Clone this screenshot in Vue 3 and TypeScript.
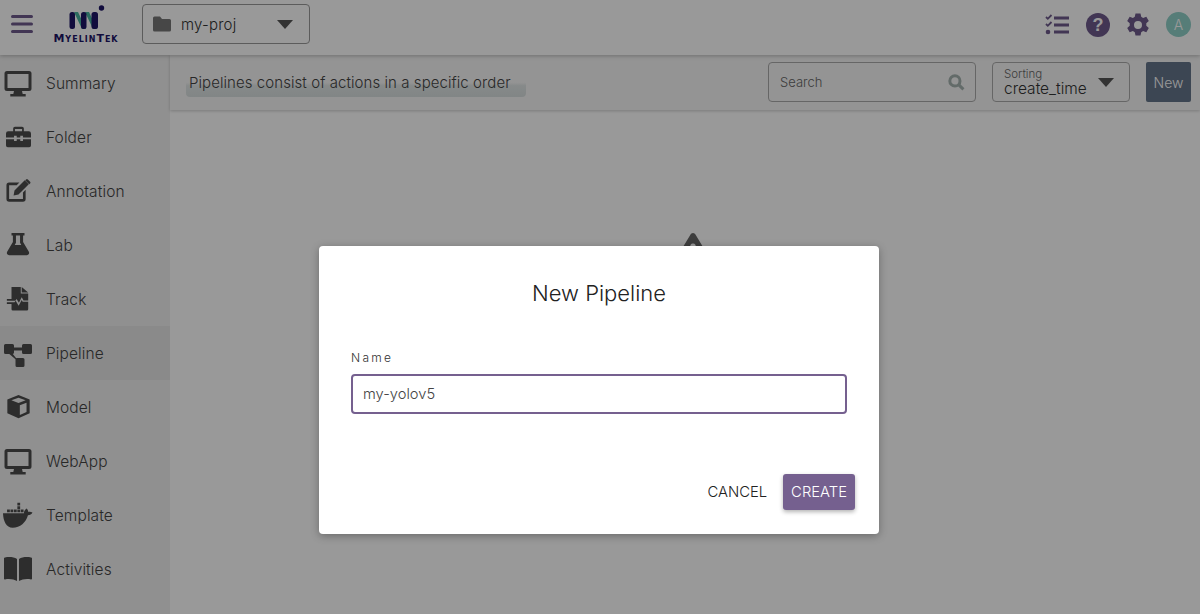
<script setup lang="ts">
interface NavItem { label: string; icon: string; size: number; active?: boolean }
const monitor = 'M3 1h22a2.500 2.500 0 0 1 2.500 2.500v15a2.500 2.500 0 0 1-2.500 2.500h-7l.7 3h3v2.500H6.300V24h3l.7-3H3a2.500 2.500 0 0 1-2.500-2.500v-15A2.500 2.500 0 0 1 3 1zm.5 3v14h21V4z'
const items: NavItem[] = [
  { label: 'Summary', size: 28, icon: monitor },
  { label: 'Folder', size: 25, icon: 'M10 2h8a2 2 0 0 1 2 2v3h5.500A2.500 2.500 0 0 1 28 9.500V14H19v-2h-3v2h-4v-2H9v2H0V9.500A2.500 2.500 0 0 1 2.500 7H8V4a2 2 0 0 1 2-2zm0 2.500V7h8V4.500zM0 16h9v2h3v-2h4v2h3v-2h9v7a2 2 0 0 1-2 2H2a2 2 0 0 1-2-2z' },
  { label: 'Annotation', size: 25, icon: 'M3.500 4H15l-3 3H3.500v15.500H19V15l3-3v10.500a3 3 0 0 1-3 3H3.500a3 3 0 0 1-3-3V7a3 3 0 0 1 3-3zM21 1.500l4.500 4.500L14 17.500l-5.500 1 1-5.500zM22.500.5a1.500 1.500 0 0 1 2 0l2.500 2.500a1.500 1.500 0 0 1 0 2L26 6l-4.500-4.500z' },
  { label: 'Lab', size: 26, icon: 'M7 1h14v2.800h-1.500v7l6.200 10.600c1 1.800-.2 3.600-2.200 3.600H4.500c-2 0-3.200-1.800-2.200-3.600l6.200-10.600v-7H7zm4.800 2.800v7.800L10.500 14h7l-1.300-2.400V3.800z' },
  { label: 'Track', size: 26, icon: 'M7 1h10v7h8v7.500h-5l-2-3.500-3 6-2.500-4-1.300 2H2v-2h5zM18 1l7 6h-7zM2 17.500h8.300l1.200-1.500 3.200 5.300 3.300-6.300 1 2H25V25a1.500 1.500 0 0 1-1.500 1.500h-15A1.500 1.500 0 0 1 7 25v-5.500H2z' },
  { label: 'Pipeline', size: 28, active: true, icon: 'M1.500 4h7A1.500 1.500 0 0 1 10 5.500V7.500h8V5.500A1.500 1.500 0 0 1 19.500 4h7A1.500 1.500 0 0 1 28 5.500v7a1.500 1.500 0 0 1-1.500 1.500h-7a1.500 1.500 0 0 1-1.500-1.500v-2h-8v2A1.500 1.500 0 0 1 8.800 14l3.400 4.200c.3-.1.500-.2.800-.2h6a1.500 1.500 0 0 1 1.500 1.500v6a1.500 1.500 0 0 1-1.500 1.500h-6a1.500 1.500 0 0 1-1.500-1.500v-6c0-.1 0-.2 0-.3L5.300 14H1.500A1.500 1.500 0 0 1 0 12.500v-7A1.500 1.500 0 0 1 1.500 4z' },
  { label: 'Model', size: 25, icon: 'M14 0 26.500 5v15.500L14 26 1.500 20.500V5zM14 3 6 6l8 3 8-3zM15.500 11.500v10.800L23 19V8.700z' },
  { label: 'WebApp', size: 28, icon: monitor },
  { label: 'Template', size: 30, icon: 'M7 8h2.600v2.600H7zm3.200 0h2.600v2.600h-2.600zm3.200 0H16v2.600h-2.600zm0-3.200H16v2.600h-2.600zm0-3.200H16v2.600h-2.600zM3.800 8h2.600v2.600H3.800zM16.600 8h2.600v2.600h-2.600zM22 7c1 .8 1.500 2 1.600 3.200 1.200-.4 2.700-.2 3.900.6-.8 1.700-2.300 2.500-4.200 2.500C21.500 20 16 25 9 25 3 25 .3 19 0 11.500h19.700c-.4-1.300.4-3.100 2.300-4.500z' },
  { label: 'Activities', size: 28, icon: 'M1 1.500c4-1 9-.5 12 1.500v22c-3-1.800-8-2.500-12-1.500-.5.100-1-.2-1-.8V2.300c0-.4.400-.7 1-.8zm26 0c.6.100 1 .4 1 .8v20.400c0 .6-.5.900-1 .8-4-1-9-.3-12 1.500V3c3-2 8-2.500 12-1.500z' },
]
</script>

<template>
  <div class="page">
    <header class="topbar">
      <svg class="burger" viewBox="0 0 22 18" width="22" height="18"><path d="M1.500 1.500h19M1.500 9h19M1.500 16.500h19" /></svg>
      <div class="logo">
        <svg viewBox="0 0 36 26" width="36" height="26">
          <path class="teal" d="M5 9h4l8 17h-4zM16 9h4l8 17h-4z" />
          <rect class="navy" x=".5" y="9" width="5.500" height="17" rx="2.500" />
          <rect class="navy" x="12" y="9" width="5.500" height="17" rx="2.500" />
          <rect class="navy" x="22.500" y="9" width="6.500" height="17" rx="2.500" />
          <circle class="navy" cx="32.500" cy="5" r="2.700" />
        </svg>
        <span class="wordmark">MyelinTek</span>
      </div>
      <div class="project">
        <svg viewBox="0 0 18 15" width="18" height="16"><path class="grey" d="M1.500 0h5.500l2 2.500h7.500A1.500 1.500 0 0 1 18 4v9.500a1.500 1.500 0 0 1-1.500 1.500h-15A1.500 1.500 0 0 1 0 13.500v-12A1.500 1.500 0 0 1 1.500 0z" /></svg>
        <span class="project-name">my-proj</span>
        <span class="caret"></span>
      </div>
      <div class="top-icons">
        <svg viewBox="0 0 25 22" width="25" height="22"><path class="purple" d="M9 2.500h15v3H9zM9 9.500h15v3H9zM9 16.500h15v3H9z" /><path class="check" d="M1 3l1.800 1.800L6.500 1M1 10l1.800 1.800L6.500 8" /><circle class="purple" cx="3" cy="18" r="2.300" /></svg>
        <svg viewBox="0 0 24 24" width="24" height="24"><circle class="purple" cx="12" cy="12" r="12" /><text x="12" y="18" class="qmark" text-anchor="middle">?</text></svg>
        <svg viewBox="0 0 24 24" width="24" height="24"><path class="purple" fill-rule="evenodd" d="M9.500 0h5l.7 3.300 1.900 1.100 3.200-1.100 2.500 4.300-2.500 2.200v2.400l2.500 2.200-2.500 4.300-3.200-1.100-1.900 1.100-.7 3.300h-5l-.7-3.300-1.900-1.100-3.200 1.100L1.200 14.400l2.500-2.200V9.800L1.200 7.600l2.500-4.300 3.200 1.100 1.900-1.100zM12 7.500a4 4 0 1 0 0 8 4 4 0 0 0 0-8z" transform="translate(0 .5)" /></svg>
        <span class="avatar">A</span>
      </div>
    </header>

    <div class="body">
      <aside class="sidebar">
        <div v-for="item in items" :key="item.label" class="nav-item" :class="{ active: item.active }">
          <span class="nav-icon"><svg viewBox="0 0 28 27" :width="item.size" :height="item.size * 27 / 28"><path class="dark" fill-rule="evenodd" :d="item.icon" /></svg></span>
          <span class="nav-label">{{ item.label }}</span>
        </div>
      </aside>
      <main class="main">
        <div class="toolbar">
          <span class="hint">Pipelines consist of actions in a specific order</span>
          <div class="search">
            <span>Search</span>
            <svg viewBox="0 0 16 16" width="17" height="17"><circle cx="6.500" cy="6.500" r="4.800" class="glass" /><path class="glass" d="M10 10l4.500 4.500" /></svg>
          </div>
          <div class="sorting">
            <div class="sort-text"><small>Sorting</small><span>create_time</span></div>
            <span class="caret"></span>
          </div>
          <button class="new-btn">New</button>
        </div>
        <div class="canvas">
          <svg class="peek" viewBox="0 0 20 14" width="20" height="14"><path fill-rule="evenodd" d="M10 0c1.200 0 2 .7 2.600 1.800L20 14H0L7.400 1.800C8 .7 8.800 0 10 0zm0 10.500a2.500 2.500 0 0 0-2.500 3.500h5a2.500 2.500 0 0 0-2.500-3.500z" /></svg>
        </div>
      </main>
    </div>

    <div class="overlay">
      <div class="dialog">
        <h2>New Pipeline</h2>
        <label class="field-label">Name</label>
        <div class="input">my-yolov5</div>
        <div class="actions">
          <button class="cancel">CANCEL</button>
          <button class="create">CREATE</button>
        </div>
      </div>
    </div>
  </div>
</template>

<style>
body { margin: 0; }
</style>

<style scoped>
.page { position: relative; width: 1200px; height: 614px; overflow: hidden; background: #fff; font-family: Inter, "Open Sans", sans-serif; color: #333; }
.topbar { height: 55px; display: flex; align-items: flex-start; background: #fff; box-shadow: 0 1px 4px rgba(0,0,0,.25); position: relative; z-index: 2; box-sizing: border-box; padding: 0 9px 0 11px; }
.burger { margin-top: 15px; flex: none; }
.burger path { stroke: #6e5a8c; stroke-width: 3; stroke-linecap: round; fill: none; }
.logo { display: flex; flex-direction: column; align-items: center; margin-left: 19px; width: 68px; margin-top: 3px; flex: none; }
.logo svg { margin-left: 1px; }
.navy { fill: #1d1466; }
.teal { fill: #46b39e; }
.wordmark { font: 700 11px/11px "DejaVu Sans", sans-serif; font-variant: small-caps; letter-spacing: 1px; color: #1d1466; margin-top: 4px; white-space: nowrap; }
.project { width: 168px; height: 40px; margin-left: 22px; margin-top: 4px; box-sizing: border-box; border: 1px solid #999; border-radius: 4px; display: flex; align-items: center; padding: 0 16px 0 10px; flex: none; }
.grey { fill: #777; }
.project-name { margin-left: 10px; font-size: 15px; letter-spacing: .2px; font-weight: 300; color: #333; flex: 1; }
.caret { display: block; flex: none; width: 0; height: 0; border-left: 8px solid transparent; border-right: 8px solid transparent; border-top: 9px solid #555; }
.top-icons { margin-left: auto; margin-top: 12px; display: flex; align-items: center; gap: 16px; }
.purple { fill: #6e5a8c; }
.check { stroke: #6e5a8c; stroke-width: 1.800; fill: none; }
.qmark { fill: #fff; font: 700 18px "Liberation Sans", sans-serif; }
.avatar { width: 25px; height: 25px; border-radius: 50%; background: #8fd0c8; color: #fff; font-size: 14px; font-weight: 300; display: flex; align-items: center; justify-content: center; }
.body { display: flex; height: 559px; }
.sidebar { width: 170px; flex: none; background: #f0f0f0; display: flex; flex-direction: column; padding-top: 1px; box-sizing: border-box; }
.nav-item { height: 54px; display: flex; align-items: center; box-sizing: border-box; padding: 0 0 0 4px; flex: none; }
.nav-item.active { background: #e6e6e6; }
.nav-icon { width: 28px; margin-right: 14px; display: flex; justify-content: center; flex: none; }
.nav-icon svg { flex: none; }
.dark { fill: #4c4c4c; }
.nav-label { font-size: 15.500px; font-weight: 300; color: #444; letter-spacing: .1px; }
.main { flex: 1; display: flex; flex-direction: column; background: #fff; min-width: 0; }
.toolbar { height: 55px; box-sizing: border-box; background: #f7f7f7; box-shadow: 0 1px 3px rgba(0,0,0,.2); display: flex; align-items: center; padding: 0 9px 1px 16px; position: relative; }
.hint { align-self: flex-start; margin-top: 14px; height: 28px; line-height: 27px; font-size: 15px; font-weight: 300; letter-spacing: .07px; color: #444; background: linear-gradient(to bottom, transparent 48%, #e0e6e6 60%, #d8dfdf 100%); border-radius: 4px; padding: 0 3px; flex: none; width: 340px; box-sizing: border-box; white-space: nowrap; }
.search { margin-left: 242px; width: 208px; height: 40px; box-sizing: border-box; border: 1px solid #aaa; border-radius: 4px; display: flex; align-items: center; justify-content: space-between; padding: 0 10px 0 11px; font-size: 13px; font-weight: 300; color: #666; flex: none; }
.glass { stroke: #a5b3b0; stroke-width: 2.800; fill: none; }
.sorting { margin-left: 16px; width: 138px; height: 40px; box-sizing: border-box; border: 1px solid #aaa; border-radius: 4px; display: flex; align-items: center; justify-content: space-between; padding: 0 15px 0 11px; flex: none; }
.sort-text { display: flex; flex-direction: column; font-size: 15.500px; line-height: 15px; font-weight: 300; color: #333; margin-top: -1px; }
.sort-text small { font-size: 11.500px; line-height: 13px; color: #666; }
.new-btn { margin-left: 16px; width: 45px; height: 40px; border: 0; border-radius: 2px; background: #65758a; color: #fff; font: 300 14px Inter, sans-serif; padding: 0; flex: none; }
.canvas { flex: 1; position: relative; }
.peek { position: absolute; left: 513px; top: 123px; }
.peek path { fill: #666; }
.overlay { position: absolute; inset: 0; z-index: 5; background: rgba(0,0,0,.4); }
.dialog { position: absolute; left: 319px; top: 246px; width: 560px; height: 288px; box-sizing: border-box; background: #fff; border-radius: 4px; padding: 33px 32px 0; box-shadow: 0 2px 8px rgba(0,0,0,.3); display: flex; flex-direction: column; }
h2 { margin: 0; font-size: 22px; line-height: 28px; font-weight: 300; color: #222; text-align: center; }
.field-label { margin-top: 44px; font-size: 12px; line-height: 14px; font-weight: 300; letter-spacing: 2.300px; color: #333; }
.input { margin-top: 9px; height: 40px; box-sizing: border-box; border: 2px solid #75608f; border-radius: 4px; padding: 0 10px; display: flex; align-items: center; font-size: 14.700px; font-weight: 300; color: #444; }
.actions { margin-top: 60px; margin-right: -8px; display: flex; justify-content: flex-end; align-items: center; gap: 8px; }
.actions button { font: 300 14.800px Inter, sans-serif; border: 0; height: 36px; border-radius: 3px; padding: 0 8px; }
.cancel { background: transparent; color: #222; }
.create { background: #75608f; color: #fff; box-shadow: 0 2px 4px rgba(0,0,0,.3); }
</style>
